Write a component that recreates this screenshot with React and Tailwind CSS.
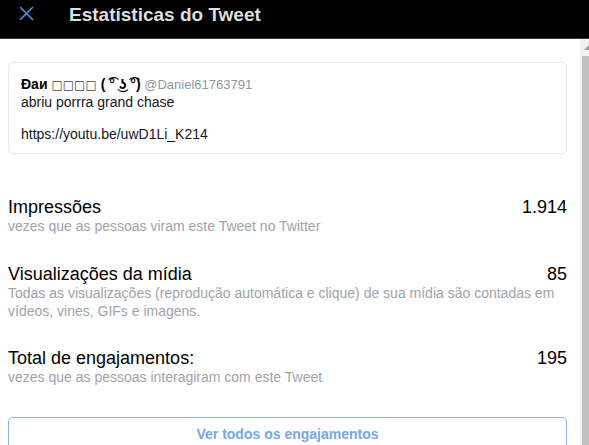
export default function App() {
  const font = { fontFamily: '"Liberation Sans", Arial, sans-serif' };
  return (
    <div className="w-[589px] h-[445px] overflow-hidden bg-white flex flex-col" style={font}>
      <div className="h-[39px] shrink-0 bg-black border-b border-[#3a3a3a] flex items-start">
        <div className="w-[69px] flex pl-[19px] pt-[6px]">
          <svg width="15" height="15" viewBox="0 0 15 15" className="block">
            <path d="M1 1 L14 14 M14 1 L1 14" stroke="#4a94ec" strokeWidth="1.6" fill="none" />
          </svg>
        </div>
        <div className="pt-[4px] text-[19px] leading-[22px] font-bold text-[#dedede]">Estatísticas do Tweet</div>
      </div>
      <div className="flex flex-1 min-h-0">
        <div className="w-[580px] pl-2 pr-[13px] flex flex-col">
          <div className="mt-[23px] border border-[#e1e8ed] rounded-[5px] pt-3 pb-[11px] px-3">
            <div className="text-[14px] leading-[18px] text-black whitespace-nowrap">
              <span className="font-bold">Ðaи </span>
              <span className="text-[#444]" style={{ fontFamily: '"DejaVu Sans", sans-serif', fontSize: '12px' }}>□□□□</span>
              <span className="font-bold"> ( ͡° ͜ʖ ͡°)</span>
              <span className="text-[13px] text-[#8899a6]"> @Daniel61763791</span>
            </div>
            <div className="text-[14px] leading-[16px] text-[#14171a]">abriu porrra grand chase</div>
            <div className="h-[16px]" />
            <div className="text-[14px] leading-[16px] text-[#14171a]">https://youtu.be/uwD1Li_K214</div>
          </div>

          <div className="mt-[43px]">
            <div className="flex justify-between text-[18px] leading-[20px] text-black">
              <span>Impressões</span>
              <span>1.914</span>
            </div>
            <div className="text-[14px] leading-[18px] text-[#9ea4aa]">vezes que as pessoas viram este Tweet no Twitter</div>
          </div>

          <div className="mt-[29px]">
            <div className="flex justify-between text-[18px] leading-[20px] text-black">
              <span>Visualizações da mídia</span>
              <span>85</span>
            </div>
            <div className="text-[14px] leading-[18px] text-[#9ea4aa]">Todas as visualizações (reprodução automática e clique) de sua mídia são contadas em vídeos, vines, GIFs e imagens.</div>
          </div>

          <div className="mt-[28px]">
            <div className="flex justify-between text-[18px] leading-[20px] text-black">
              <span>Total de engajamentos:</span>
              <span>195</span>
            </div>
            <div className="text-[14px] leading-[18px] text-[#9ea4aa]">vezes que as pessoas interagiram com este Tweet</div>
          </div>

          <div className="mt-[31px] border border-[#8cb3e8] rounded-[5px] pt-[7px] pb-[8px] text-center text-[14px] leading-[18px] font-bold text-[#79a5e8]">
            Ver todos os engajamentos
          </div>
        </div>
        <div className="flex-1 overflow-hidden bg-[#f1f1f1]">
          <div className="w-[17px] h-full flex flex-col">
            <div className="h-[17px] shrink-0 flex items-center justify-center">
              <svg width="9" height="5" viewBox="0 0 9 5" className="block">
                <path d="M0 5 L4.5 0 L9 5 Z" fill="#a3a3a3" />
              </svg>
            </div>
            <div className="flex-1 mx-[2px] bg-[#c1c1c1]" />
          </div>
        </div>
      </div>
    </div>
  );
}
